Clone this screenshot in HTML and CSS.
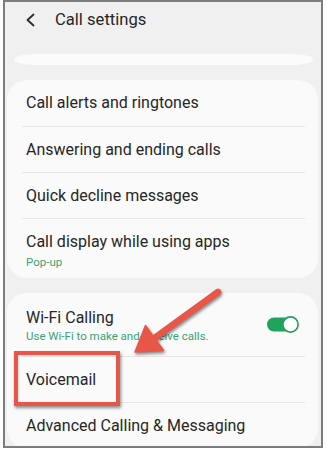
FILE: index.html
```html
<!DOCTYPE html>
<html lang="en">
<head>
<meta charset="utf-8">
<title>Call settings</title>
<link rel="stylesheet" href="styles.css">
</head>
<body>
<div class="frame">
  <header class="top">
    <svg class="back" width="12" height="14" viewBox="0 0 12 14" aria-hidden="true"><path d="M8.5 1.5 L2.5 7 L8.5 12.5" fill="none" stroke="#2a2a2a" stroke-width="1.8" stroke-linecap="round" stroke-linejoin="round"/></svg>
    <span class="title">Call settings</span>
  </header>
  <div class="stub"></div>
  <section class="card">
    <div class="row"><span class="label">Call alerts and ringtones</span></div>
    <div class="row"><span class="label">Answering and ending calls</span></div>
    <div class="row"><span class="label">Quick decline messages</span></div>
    <div class="row row-sub">
      <div class="label">Call display while using apps</div>
      <div class="sub">Pop-up</div>
    </div>
  </section>
  <section class="card">
    <div class="row row-sub row-wifi">
      <div class="texts">
        <div class="label">Wi-Fi Calling</div>
        <div class="sub">Use Wi-Fi to make and receive calls.</div>
      </div>
      <svg class="toggle" width="34" height="19" viewBox="0 0 34 19" aria-hidden="true">
        <rect x="1" y="2.5" width="28" height="14" rx="7" fill="#20a35c"/>
        <circle cx="24.5" cy="9.5" r="7.6" fill="#fff" stroke="#20a35c" stroke-width="1.6"/>
      </svg>
    </div>
    <div class="row"><span class="label">Voicemail</span></div>
    <div class="row"><span class="label">Advanced Calling &amp; Messaging</span></div>
  </section>
  <div class="highlight"></div>
  <svg class="arrow" width="316" height="444" viewBox="5 2 316 444" aria-hidden="true">
    <line x1="218" y1="292" x2="156" y2="337" stroke="#e8564a" stroke-width="6.5" stroke-linecap="round"/>
    <polygon points="135,352 145.5,325.5 163.5,350.5" fill="#e8564a" stroke="#e8564a" stroke-width="1.5" stroke-linejoin="round"/>
  </svg>
</div>
</body>
</html>
```
FILE: styles.css
```css
html, body {
  margin: 0;
  padding: 0;
  background: #ffffff;
}
body {
  font-family: Roboto, "Noto Sans", "Liberation Sans", sans-serif;
  color: #262626;
}
.frame {
  position: relative;
  box-sizing: border-box;
  width: 320px;
  height: 448px;
  margin-left: 3px;
  border: 2px solid #7c7c7c;
  background: #f0f0f1;
  overflow: hidden;
  display: flex;
  flex-direction: column;
}
.top {
  flex: none;
  height: 36px;
  display: flex;
  align-items: center;
  padding-left: 20px;
}
.back {
  display: block;
}
.title {
  margin-left: 18px;
  font-size: 16.6px;
  color: #262626;
  position: relative;
  top: -1px;
}
.stub {
  flex: none;
  height: 11px;
  margin: 16px 8px 0 9px;
  background: #fbfbfb;
  border-radius: 24px / 6px;
}
.card {
  flex: none;
  margin: 15px 3px 0 2px;
  background: #fafafa;
  border-radius: 20px;
}
.row {
  margin: 0 13px 0 15px;
  padding-left: 4px;
  height: 46px;
  display: flex;
  align-items: center;
  box-sizing: border-box;
}
.row + .row {
  border-top: 1px solid #e6e6e6;
}
.label {
  font-size: 16px;
  line-height: 20px;
  color: #262626;
}
.row-sub {
  height: 60px;
  flex-direction: column;
  align-items: flex-start;
  justify-content: flex-start;
  padding-top: 13px;
}
.sub {
  margin-top: 3px;
  font-size: 11.5px;
  line-height: 14px;
  color: #3aa277;
}
.row-wifi {
  height: 63px;
  flex-direction: row;
  align-items: center;
  justify-content: space-between;
  padding-top: 0;
  padding-right: 5px;
}
.row-wifi .texts {
  display: flex;
  flex-direction: column;
  margin-top: 2px;
}
.row-wifi .sub {
  margin-top: 1px;
}
.toggle {
  display: block;
  flex: none;
}
.highlight {
  position: absolute;
  left: 9px;
  top: 349px;
  width: 106px;
  height: 55px;
  box-sizing: border-box;
  border: 4px solid #e8564a;
  box-shadow: 1px 2px 3px rgba(0, 0, 0, 0.45), inset 1px 1px 2px rgba(0, 0, 0, 0.15);
}
.arrow {
  position: absolute;
  left: 0;
  top: 0;
  filter: drop-shadow(1px 2px 1.5px rgba(0, 0, 0, 0.45));
}
```
